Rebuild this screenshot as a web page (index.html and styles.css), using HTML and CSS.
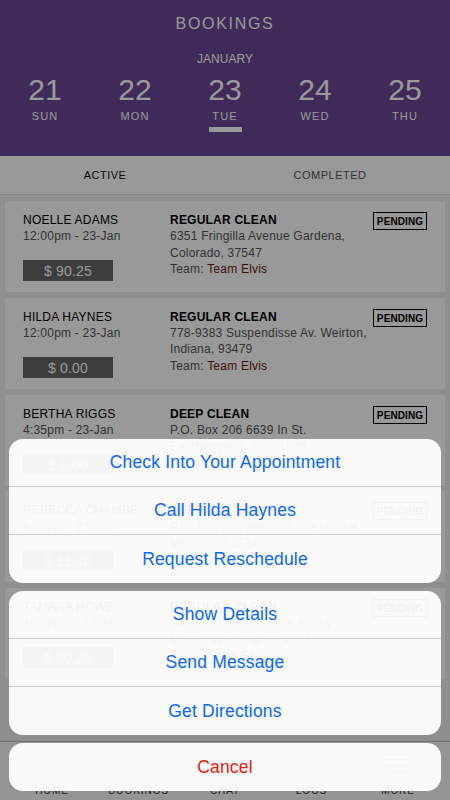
FILE: index.html
```
<!DOCTYPE html>
<html lang="en">
<head>
    <meta charset="UTF-8">
    <meta name="viewport" content="width=device-width, initial-scale=1.0">
    <title>Bookings</title>
    <link rel="stylesheet" href="styles.css">
</head>
<body>
    <div class="app">
        <header class="header">
            <h1>BOOKINGS</h1>
            <div class="month">JANUARY</div>
            <div class="days">
                <div class="day"><b>21</b><span>SUN</span></div>
                <div class="day"><b>22</b><span>MON</span></div>
                <div class="day active"><b>23</b><span>TUE</span></div>
                <div class="day"><b>24</b><span>WED</span></div>
                <div class="day"><b>25</b><span>THU</span></div>
            </div>
        </header>
        <nav class="tabs">
            <a class="tab selected">ACTIVE</a>
            <a class="tab">COMPLETED</a>
        </nav>
        <main class="list">
            <div class="card">
                <div class="client">
                    <div class="name">NOELLE ADAMS</div>
                    <div>12:00pm - 23-Jan</div>
                    <div class="price">$ 90.25</div>
                </div>
                <div class="job">
                    <div class="service">REGULAR CLEAN</div>
                    <div>6351 Fringilla Avenue Gardena,<br>Colorado, 37547</div>
                    <div>Team: <span class="team">Team Elvis</span></div>
                </div>
                <div class="status">PENDING</div>
            </div>
            <div class="card">
                <div class="client">
                    <div class="name">HILDA HAYNES</div>
                    <div>12:00pm - 23-Jan</div>
                    <div class="price">$ 0.00</div>
                </div>
                <div class="job">
                    <div class="service">REGULAR CLEAN</div>
                    <div>778-9383 Suspendisse Av. Weirton,<br>Indiana, 93479</div>
                    <div>Team: <span class="team">Team Elvis</span></div>
                </div>
                <div class="status">PENDING</div>
            </div>
            <div class="card">
                <div class="client">
                    <div class="name">BERTHA RIGGS</div>
                    <div>4:35pm - 23-Jan</div>
                    <div class="price">$ 0.00</div>
                </div>
                <div class="job">
                    <div class="service">DEEP CLEAN</div>
                    <div>P.O. Box 206 6639 In St.<br>Easthampton, Tn, 31626</div>
                    <div>Team: <span class="team">Team Elvis</span></div>
                </div>
                <div class="status">PENDING</div>
            </div>
            <div class="card">
                <div class="client">
                    <div class="name">REBECCA CHAMBE...</div>
                    <div>8:00pm - 23-Jan</div>
                    <div class="price">$ 11.40</div>
                </div>
                <div class="job">
                    <div class="service">DEEP CLEAN</div>
                    <div>P.O. Box 813 5982 Sit Ave.Liberal,,<br>Vermont, 51324</div>
                    <div>Team: <span class="team">Team Elvis</span></div>
                </div>
                <div class="status">PENDING</div>
            </div>
            <div class="card">
                <div class="client">
                    <div class="name">TAMARA HOWE</div>
                    <div>10:00pm - 23-Jan</div>
                    <div class="price">$ 90.25</div>
                </div>
                <div class="job">
                    <div class="service">REGULAR CLEAN</div>
                    <div>5415 Lobortis. Avenue Rocky<br>Mount, Washington, 48580</div>
                    <div>Team: <span class="team">Team Elvis</span></div>
                </div>
                <div class="status">PENDING</div>
            </div>
        </main>
        <footer class="tabbar">
            <a class="item">
                <svg viewBox="0 0 26 24"><path d="M2 12 13 1.500 24 12M5 9.500V23h5v-8h6v8h5V9.500"/></svg>
                <span>HOME</span>
            </a>
            <a class="item">
                <svg viewBox="0 0 26 24"><path d="M3 5h20v18H3zM3 9h20M7 3v4M13 3v4M19 3v4"/><path stroke-dasharray="2 3" d="M7 13h14M7 17h14M7 20h14"/></svg>
                <span>BOOKINGS</span>
            </a>
            <a class="item">
                <svg viewBox="0 0 26 24"><path d="M13 4c6 0 10 3.500 10 8s-4 8-10 8c-1.500 0-3-.2-4-.6L4.500 22l.7-4.500C3.800 16 3 14 3 12c0-4.500 4-8 10-8z"/></svg>
                <span>CHAT</span>
            </a>
            <a class="item">
                <svg viewBox="0 0 26 24"><circle cx="13" cy="13" r="9.500"/><path d="M13 6v7H8"/></svg>
                <span>LOGS</span>
            </a>
            <a class="item">
                <svg class="more" viewBox="0 0 26 24"><path d="M0 6.500h26M0 12.500h26M8 18.500h18"/></svg>
                <span>MORE</span>
            </a>
        </footer>
    </div>

    <div class="overlay">
        <div class="sheet">
            <button>Check Into Your Appointment</button>
            <button>Call Hilda Haynes</button>
            <button>Request Reschedule</button>
        </div>
        <div class="sheet">
            <button>Show Details</button>
            <button>Send Message</button>
            <button>Get Directions</button>
        </div>
        <div class="sheet">
            <button class="cancel">Cancel</button>
        </div>
    </div>
</body>
</html>
```
FILE: styles.css
```
* {
    box-sizing: border-box;
}
body {
    margin: 0;
    font-family: "Liberation Sans", Arial, sans-serif;
    font-size: 12px;
    color: #555;
}
.app {
    display: flex;
    flex-direction: column;
    height: 800px;
    overflow: hidden;
    background-color: #eee;
}

.header {
    height: 156px;
    flex: none;
    padding-top: 14px;
    background-color: #694694;
    color: #fff;
    text-align: center;
}
h1 {
    margin: 0;
    font-size: 16px;
    font-weight: normal;
    line-height: 20px;
    letter-spacing: 1.7px;
}
.month {
    margin-top: 17px;
    line-height: 16px;
}
.days {
    display: flex;
    margin-top: 5px;
}
.day {
    width: 90px;
    display: flex;
    flex-direction: column;
    align-items: center;
}
.day b {
    font-size: 30px;
    font-weight: normal;
    line-height: 36px;
}
.day span {
    font-size: 11px;
    line-height: 16px;
    letter-spacing: 1.1px;
}
.day.active::after {
    content: "";
    width: 33px;
    height: 5px;
    margin-top: 3px;
    background-color: #fff;
}

.tabs {
    display: flex;
    flex: none;
    height: 39px;
    background-color: #fff;
    border-bottom: 1px solid #e0e0e0;
}
.tab {
    flex: 1;
    padding-right: 15px;
    text-align: center;
    font-size: 11px;
    line-height: 39px;
    letter-spacing: 0.5px;
}
.tab.selected {
    color: #111;
}

.list {
    flex: 1;
    min-height: 0;
    display: flex;
    flex-direction: column;
    gap: 5.75px;
    padding: 6px 5px;
}
.card {
    display: flex;
    flex: none;
    height: 91px;
    padding: 11px 18px;
    background-color: #fff;
    line-height: 16.25px;
    letter-spacing: 0.22px;
    white-space: nowrap;
}
.client {
    width: 130px;
    margin-right: 17px;
}
.name {
    color: #000;
}
.price {
    width: 90px;
    height: 21px;
    margin-top: 15.5px;
    background-color: #666;
    color: #fff;
    font-size: 14px;
    line-height: 22px;
    text-align: center;
}
.job {
    width: 203px;
}
.service {
    color: #000;
    font-weight: bold;
}
.team {
    color: #661a10;
}
.status {
    width: 54px;
    height: 18px;
    flex: none;
    border: 1px solid #000;
    color: #000;
    font-size: 10px;
    font-weight: bold;
    line-height: 17px;
    letter-spacing: 0.1px;
    text-align: center;
}

.tabbar {
    display: flex;
    flex: none;
    height: 59px;
    padding: 11px 8.75px 0;
    background-color: #f8f8f8;
    border-top: 1px solid #bbb;
}
.item {
    flex: 1;
    display: flex;
    flex-direction: column;
    align-items: center;
    font-size: 10px;
    line-height: 12px;
    letter-spacing: 0.9px;
    color: #333;
}
.item svg {
    width: 26px;
    height: 24px;
    margin-bottom: 8px;
    fill: none;
    stroke: #aaa;
    stroke-width: 1;
}
.item .more {
    stroke: #555;
    stroke-width: 1.2;
}

.overlay {
    position: absolute;
    top: 0;
    left: 0;
    width: 450px;
    height: 800px;
    padding: 9px;
    display: flex;
    flex-direction: column;
    justify-content: flex-end;
    gap: 8px;
    background-color: rgba(0, 0, 0, 0.4);
}
.sheet {
    border-radius: 14px;
    background-color: rgba(255, 255, 255, 0.95);
    overflow: hidden;
}
.sheet button {
    display: block;
    width: 100%;
    height: 48px;
    padding: 0;
    border: none;
    background: none;
    font-family: inherit;
    font-size: 17.5px;
    letter-spacing: 0.18px;
    color: #0a66ff;
}
.sheet button:not(:last-child) {
    border-bottom: 1px solid #ccc;
}
.sheet .cancel {
    color: #f5150f;
}
```
